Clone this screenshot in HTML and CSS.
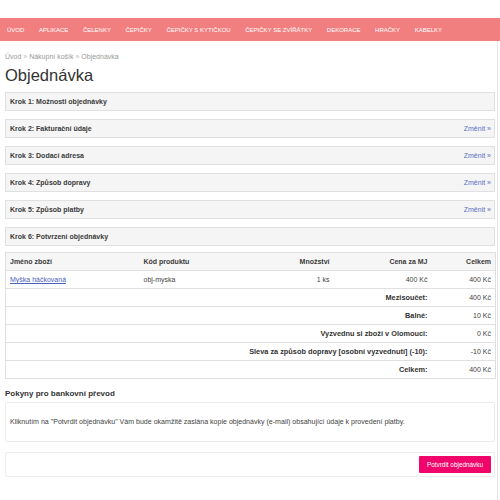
FILE: index.html
```html
<!DOCTYPE html>
<html lang="cs">
<head>
<meta charset="utf-8">
<title>Objednávka</title>
<link rel="stylesheet" href="styles.css">
</head>
<body>
<div class="top"></div>
<nav class="menu">
  <a href="#">ÚVOD</a>
  <a href="#">APLIKACE</a>
  <a href="#">ČELENKY</a>
  <a href="#">ČEPIČKY</a>
  <a href="#">ČEPIČKY S KYTIČKOU</a>
  <a href="#">ČEPIČKY SE ZVÍŘÁTKY</a>
  <a href="#">DEKORACE</a>
  <a href="#">HRAČKY</a>
  <a href="#">KABELKY</a>
</nav>
<div class="page">
  <div class="crumbs"><a href="#">Úvod</a> <span class="sep">»</span> <a href="#">Nákupní košík</a> <span class="sep">»</span> Objednávka</div>
  <h1>Objednávka</h1>

  <div class="step"><span class="step-title">Krok 1: Možnosti objednávky</span></div>
  <div class="step"><span class="step-title">Krok 2: Fakturační údaje</span><a class="change" href="#">Změnit »</a></div>
  <div class="step"><span class="step-title">Krok 3: Dodací adresa</span><a class="change" href="#">Změnit »</a></div>
  <div class="step"><span class="step-title">Krok 4: Způsob dopravy</span><a class="change" href="#">Změnit »</a></div>
  <div class="step"><span class="step-title">Krok 5: Způsob platby</span><a class="change" href="#">Změnit »</a></div>
  <div class="step last"><span class="step-title">Krok 6: Potvrzení objednávky</span></div>

  <table class="cart">
    <colgroup>
      <col class="c1"><col class="c2"><col class="c3"><col class="c4"><col class="c5">
    </colgroup>
    <thead>
      <tr>
        <th class="l">Jméno zboží</th>
        <th class="l">Kód produktu</th>
        <th class="r">Množství</th>
        <th class="r">Cena za MJ</th>
        <th class="r">Celkem</th>
      </tr>
    </thead>
    <tbody>
      <tr>
        <td class="l"><a class="prod" href="#">Myška háčkovaná</a></td>
        <td class="l">obj-myska</td>
        <td class="r">1 ks</td>
        <td class="r">400 Kč</td>
        <td class="r">400 Kč</td>
      </tr>
      <tr><td colspan="4" class="r b">Mezisoučet:</td><td class="r">400 Kč</td></tr>
      <tr><td colspan="4" class="r b">Balné:</td><td class="r">10 Kč</td></tr>
      <tr><td colspan="4" class="r b">Vyzvednu si zboží v Olomouci:</td><td class="r">0 Kč</td></tr>
      <tr><td colspan="4" class="r b">Sleva za způsob dopravy [osobní vyzvednutí] (-10):</td><td class="r">-10 Kč</td></tr>
      <tr><td colspan="4" class="r b">Celkem:</td><td class="r">400 Kč</td></tr>
    </tbody>
  </table>

  <h2>Pokyny pro bankovní převod</h2>
  <div class="box info">Kliknutím na "Potvrdit objednávku" Vám bude okamžitě zaslána kopie objednávky (e-mail) obsahující údaje k provedení platby.</div>
  <div class="box actions"><button class="confirm" type="button">Potvrdit objednávku</button></div>
</div>
</body>
</html>
```
FILE: styles.css
```css
html, body {
  margin: 0;
  padding: 0;
  background: #fff;
}
body {
  font-family: "Liberation Sans", Arial, Helvetica, sans-serif;
  color: #333;
}
.top {
  height: 18px;
}
.menu {
  display: flex;
  align-items: center;
  height: 23px;
  background: #f27f80;
  padding-left: 0;
}
.menu a {
  color: #fff;
  font-size: 6px;
  text-decoration: none;
  padding: 0 7.3px;
  white-space: nowrap;
}
.menu a:first-child {
  padding-left: 7px;
}
.page {
  width: 490px;
  padding: 0 2px 0 5px;
  border-right: 1px solid #e6e6e6;
  min-height: 459px;
}
.crumbs {
  padding-top: 11px;
  font-size: 7px;
  line-height: 10px;
  color: #999;
}
.crumbs a {
  color: #999;
  text-decoration: none;
}
.crumbs .sep {
  color: #bbb;
}
h1 {
  margin: 3px 0 7px;
  font-size: 16.5px;
  line-height: 20px;
  font-weight: normal;
  color: #333;
}
.step {
  display: flex;
  justify-content: space-between;
  align-items: center;
  height: 17px;
  padding: 0 3px 0 4px;
  margin-bottom: 8px;
  border: 1px solid #e0e0e0;
  background: #f5f5f5;
  font-size: 7px;
}
.step.last {
  margin-bottom: 6px;
}
.step-title {
  font-weight: bold;
  color: #3a3a3a;
}
.change {
  color: #5a6fc4;
  text-decoration: none;
}
.cart {
  width: 490px;
  table-layout: fixed;
  border-collapse: collapse;
  border: 1px solid #e0e0e0;
  font-size: 7px;
}
.c1 { width: 134px; }
.c2 { width: 97px; }
.c3 { width: 97px; }
.c4 { width: 98px; }
.c5 { width: 64px; }
.cart th,
.cart td {
  padding: 4px;
  line-height: 9px;
  border-top: 1px solid #e0e0e0;
  white-space: nowrap;
}
.cart thead th {
  background: #f6f6f6;
  font-weight: bold;
  color: #3a3a3a;
}
.cart td {
  color: #444;
}
.l { text-align: left; }
.r { text-align: right; }
.cart td.b {
  font-weight: bold;
  font-size: 7.35px;
  color: #333;
}
.prod {
  color: #4a62b8;
  text-decoration: underline;
}
h2 {
  margin: 10px 0 3px;
  font-size: 8px;
  line-height: 10px;
  font-weight: bold;
  color: #333;
}
.box {
  border: 1px solid #ececec;
  border-radius: 2px;
}
.info {
  padding: 14px 4px;
  font-size: 7.05px;
  line-height: 10px;
  color: #444;
}
.actions {
  display: flex;
  justify-content: flex-end;
  margin-top: 10px;
  padding: 3px;
}
.confirm {
  width: 72px;
  height: 17px;
  padding: 0;
  border: none;
  border-radius: 1px;
  background: #f0066b;
  color: #fff;
  font-family: "Liberation Sans", Arial, sans-serif;
  font-size: 6.4px;
}
```
